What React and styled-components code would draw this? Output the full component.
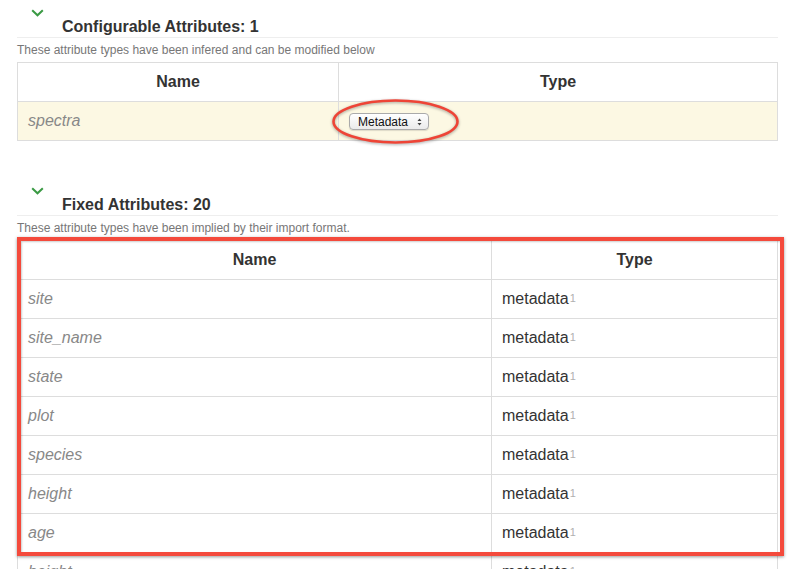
import React from "react";
import styled, { createGlobalStyle } from "styled-components";

const GlobalStyle = createGlobalStyle`
  html, body {
    margin: 0;
    padding: 0;
    overflow: hidden;
    background: #fff;
  }
  body {
    font-family: "Liberation Sans", Arial, Helvetica, sans-serif;
    color: #333;
  }
`;

const fixedAttributes = ["site", "site_name", "state", "plot", "species", "height", "age", "height"];

const Page = styled.div`
  display: flex;
  flex-direction: column;
  gap: 37px;
  width: 761px;
  padding-left: 17px;
`;

const Section = styled.section`
  display: flex;
  flex-direction: column;
`;

const Toggle = styled.button`
  display: block;
  height: 16px;
  margin: 0 0 0 14px;
  padding: 9px 0 0;
  border: 0;
  background: none;
  cursor: pointer;
  align-self: flex-start;

  svg {
    display: block;
  }
`;

const Title = styled.h4`
  margin: 1px 0 0;
  padding-left: 45px;
  font-size: 16px;
  line-height: 20px;
  font-weight: bold;
  color: #333;
  border-bottom: 1px solid #eee;
`;

const Caption = styled.p`
  margin: 4px 0 0;
  font-size: 12px;
  line-height: 16px;
  color: #777;
`;

const TableWrap = styled.div`
  position: relative;
  margin-top: 4px;
`;

const Table = styled.table`
  width: 100%;
  border-collapse: collapse;
  table-layout: fixed;
  border: 1px solid #ddd;
`;

const HeadCell = styled.th`
  padding: 8px 10px;
  font-size: 16px;
  line-height: 22px;
  font-weight: bold;
  text-align: center;
  color: #333;
  border: 1px solid #ddd;
`;

const Row = styled.tr`
  background: ${(props) => (props.$warning ? "#fcf8e3" : "#fff")};
`;

const Cell = styled.td`
  padding: 8px 10px;
  font-size: 16px;
  line-height: 22px;
  color: #333;
  border: 1px solid #ddd;
  white-space: nowrap;
`;

const NameCell = styled(Cell)`
  font-style: italic;
  color: #888;
`;

const Sup = styled.span`
  margin-left: 1px;
  font-size: 11px;
  line-height: 0;
  color: #b0b0b0;
  vertical-align: 2px;
`;

const SelectHolder = styled.div`
  position: relative;
  display: inline-block;
  vertical-align: middle;
`;

const TypeSelect = styled.button`
  display: flex;
  align-items: center;
  justify-content: space-between;
  box-sizing: border-box;
  width: 80px;
  height: 17px;
  padding: 0 6px 0 8px;
  font: 12px "Liberation Sans", Arial, sans-serif;
  color: #111;
  border: 1px solid #aaa;
  border-radius: 4px;
  background: linear-gradient(#ffffff, #ebebeb);
  box-shadow: 0 1px 1px rgba(0, 0, 0, 0.12);
`;

const Ellipse = styled.svg`
  position: absolute;
  left: -18px;
  top: -14px;
  overflow: visible;
  pointer-events: none;
  filter: drop-shadow(0 1px 1.5px rgba(0, 0, 0, 0.35));
`;

const Highlight = styled.div`
  position: absolute;
  top: -3px;
  left: 0;
  width: 767px;
  height: 319px;
  box-sizing: border-box;
  border: 4px solid #f44a3c;
  box-shadow: 0 1px 3px rgba(0, 0, 0, 0.4), inset 1px 1px 2px rgba(0, 0, 0, 0.2);
  pointer-events: none;
`;

const Chevron = () => (
  <svg width="13" height="8" viewBox="0 0 13 8">
    <polyline points="1.2,1.2 6.5,6.3 11.8,1.2" fill="none" stroke="#3a9a44" strokeWidth="2" />
  </svg>
);

const UpDown = () => (
  <svg width="5" height="8" viewBox="0 0 5 8">
    <path d="M2.5 0.5 L4.5 3 H0.5 Z M2.5 7.5 L0.5 5 H4.5 Z" fill="#444" />
  </svg>
);

const Header = ({ title, caption }) => (
  <>
    <Toggle>
      <Chevron />
    </Toggle>
    <Title>{title}</Title>
    <Caption>{caption}</Caption>
  </>
);

const App = () => {
  return (
    <>
      <GlobalStyle />
      <Page>
        <Section>
          <Header
            title="Configurable Attributes: 1"
            caption="These attribute types have been infered and can be modified below"
          />
          <TableWrap>
            <Table>
              <colgroup>
                <col style={{ width: "321px" }} />
                <col />
              </colgroup>
              <thead>
                <tr>
                  <HeadCell>Name</HeadCell>
                  <HeadCell>Type</HeadCell>
                </tr>
              </thead>
              <tbody>
                <Row $warning>
                  <NameCell>spectra</NameCell>
                  <Cell>
                    <SelectHolder>
                      <TypeSelect>
                        Metadata
                        <UpDown />
                      </TypeSelect>
                      <Ellipse width="130" height="46" viewBox="0 0 130 46">
                        <ellipse cx="64.5" cy="22.5" rx="62" ry="21" fill="none" stroke="#ee4436" strokeWidth="2.6" />
                      </Ellipse>
                    </SelectHolder>
                  </Cell>
                </Row>
              </tbody>
            </Table>
          </TableWrap>
        </Section>

        <Section>
          <Header
            title="Fixed Attributes: 20"
            caption="These attribute types have been implied by their import format."
          />
          <TableWrap>
            <Table>
              <colgroup>
                <col style={{ width: "474px" }} />
                <col />
              </colgroup>
              <thead>
                <tr>
                  <HeadCell>Name</HeadCell>
                  <HeadCell>Type</HeadCell>
                </tr>
              </thead>
              <tbody>
                {fixedAttributes.map((name, index) => (
                  <Row key={index}>
                    <NameCell>{name}</NameCell>
                    <Cell>
                      metadata<Sup>1</Sup>
                    </Cell>
                  </Row>
                ))}
              </tbody>
            </Table>
            <Highlight />
          </TableWrap>
        </Section>
      </Page>
    </>
  );
};

export default App;
